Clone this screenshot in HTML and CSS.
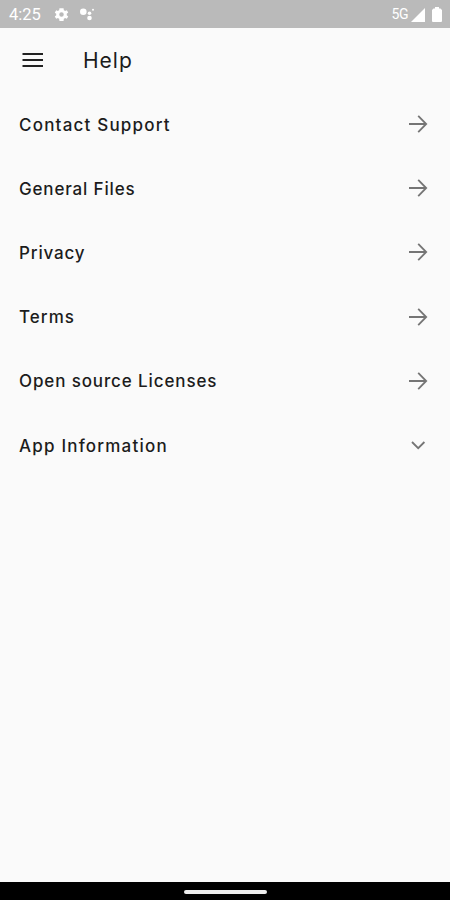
FILE: index.html
```html
<!DOCTYPE html>
<html lang="en">

<head>
    <meta charset="utf-8">
    <title>Help</title>
    <link rel="stylesheet" href="styles.css">
</head>

<body>
    <div class="status">
        <span class="time">4:25</span>
        <svg class="gear" width="17" height="17" viewBox="0 0 24 24">
            <path fill-rule="evenodd" d="M19.400 13a7.500 7.500 0 0 0 0-2l2.100-1.650-2-3.460-2.500 1a7.700 7.700 0 0 0-1.700-1L14.900 3h-5.800l-.4 2.900a7.700 7.700 0 0 0-1.700 1l-2.500-1-2 3.460L4.600 11a7.500 7.500 0 0 0 0 2l-2.100 1.650 2 3.460 2.500-1a7.700 7.700 0 0 0 1.700 1l.4 2.900h5.800l.4-2.900a7.700 7.700 0 0 0 1.700-1l2.500 1 2-3.460zM12 15.200a3.200 3.200 0 1 1 0-6.400 3.200 3.200 0 0 1 0 6.400z" />
        </svg>
        <svg class="dots" width="17" height="14" viewBox="0 0 17 14">
            <circle cx="4.300" cy="4.700" r="3.300" />
            <circle cx="10.500" cy="6.200" r="1.800" />
            <circle cx="10.500" cy="11" r="2.300" />
            <circle cx="14" cy="2.700" r="1" />
        </svg>
        <span class="network">5G</span>
        <svg class="signal" width="14" height="14" viewBox="0 0 14 14">
            <path d="M14 0v14H0z" />
        </svg>
        <svg class="battery" width="10" height="15" viewBox="0 0 10 15">
            <path d="M3 0h4v1.500h1.500L10 3v11q0 1-1 1H1q-1 0-1-1V3l1.500-1.500H3z" />
        </svg>
    </div>

    <header class="appbar">
        <svg class="menu" width="22" height="16" viewBox="0 0 22 16">
            <path d="M.5 2h20.500M.5 8h20.500M.5 14h20.500" />
        </svg>
        <h1>Help</h1>
    </header>

    <main class="list">
        <div class="row">
            <span class="label contact">Contact Support</span>
            <svg class="icon" width="20" height="20" viewBox="0 0 20 20"><path d="M1 10h17M10.200 1.800L18.200 10l-8 8.200" /></svg>
        </div>
        <div class="row">
            <span class="label general">General Files</span>
            <svg class="icon" width="20" height="20" viewBox="0 0 20 20"><path d="M1 10h17M10.200 1.800L18.200 10l-8 8.200" /></svg>
        </div>
        <div class="row">
            <span class="label privacy">Privacy</span>
            <svg class="icon" width="20" height="20" viewBox="0 0 20 20"><path d="M1 10h17M10.200 1.800L18.200 10l-8 8.200" /></svg>
        </div>
        <div class="row">
            <span class="label terms">Terms</span>
            <svg class="icon" width="20" height="20" viewBox="0 0 20 20"><path d="M1 10h17M10.200 1.800L18.200 10l-8 8.200" /></svg>
        </div>
        <div class="row">
            <span class="label licenses">Open source Licenses</span>
            <svg class="icon" width="20" height="20" viewBox="0 0 20 20"><path d="M1 10h17M10.200 1.800L18.200 10l-8 8.200" /></svg>
        </div>
        <div class="row">
            <span class="label info">App Information</span>
            <svg class="icon" width="20" height="20" viewBox="0 0 20 20"><path d="M4 7l6.200 6.200L16.400 7" /></svg>
        </div>
    </main>

    <div class="navbar">
        <div class="handle"></div>
    </div>
</body>

</html>
```

FILE: styles.css
```css
body {
    margin: 0;
    height: 900px;
    display: flex;
    flex-direction: column;
    overflow: hidden;
    background: #fafafa;
    color: #1c1c1c;
    font-family: Inter, sans-serif;
}

/* system status bar */
.status {
    height: 28px;
    display: flex;
    align-items: center;
    padding: 0 8px 0 9px;
    background: #bababa;
    color: #fff;
    fill: #fff;
    font-family: Roboto, sans-serif;
}

.time {
    width: 44px;
    padding-top: 1px;
    font-size: 16.5px;
}

.dots {
    margin-left: 9px;
}

.network {
    margin-left: auto;
    font-size: 14px;
    letter-spacing: -0.5px;
}

.signal {
    margin: 1px 7px 0 3px;
}

/* title */
.appbar {
    height: 64px;
    display: flex;
    align-items: center;
    padding-left: 22px;
}

.menu {
    stroke: #222;
    stroke-width: 2;
}

h1 {
    margin: 0 0 0 39px;
    font-size: 21px;
    font-weight: 400;
    letter-spacing: 1px;
}

/* help entries */
.list {
    flex: 1;
}

.row {
    height: 64.2px;
    display: flex;
    align-items: center;
    justify-content: space-between;
    padding: 0 22px 0 19px;
}

.label {
    padding-top: 1px;
    font-size: 17px;
    font-weight: 500;
    white-space: nowrap;
}

.contact,
.info {
    letter-spacing: 1.2px;
}

.general,
.privacy {
    letter-spacing: 0.84px;
}

.terms {
    letter-spacing: 1.05px;
}

.licenses {
    letter-spacing: 0.88px;
}

.icon {
    fill: none;
    stroke: #757575;
    stroke-width: 1.8;
}

/* gesture bar */
.navbar {
    height: 18px;
    display: flex;
    align-items: center;
    justify-content: center;
    background: #000;
}

.handle {
    width: 83px;
    height: 4px;
    margin-top: 1px;
    border-radius: 2px;
    background: #eee;
}
```
